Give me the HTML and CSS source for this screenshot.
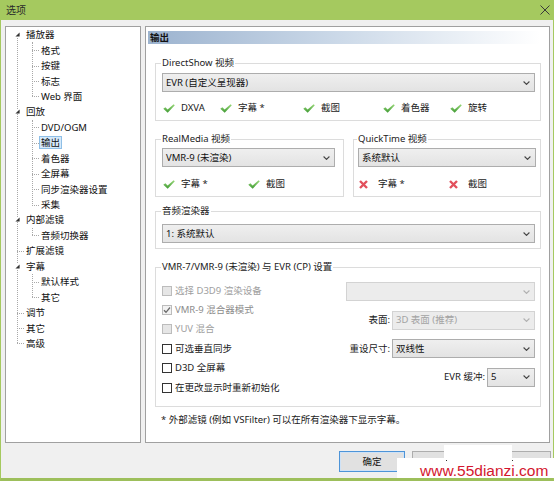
FILE: index.html
```html
<!DOCTYPE html>
<html lang="zh-CN">
<head>
<meta charset="utf-8">
<title>选项</title>
<link rel="stylesheet" href="styles.css">
</head>
<body>
<svg class="defs" width="0" height="0" aria-hidden="true">
  <defs>
    <linearGradient id="gck" x1="0" y1="0" x2="0" y2="1">
      <stop offset="0" stop-color="#9ad97a"/>
      <stop offset="1" stop-color="#3f9a33"/>
    </linearGradient>
    <symbol id="ck" viewBox="0 0 12 9">
      <path d="M0.3 4.7 L2.4 3.2 L4.6 5.5 L10.6 0.2 L11.8 1.3 L4.7 8.7 Z" fill="url(#gck)"/>
    </symbol>
    <symbol id="xx" viewBox="0 0 9 9">
      <path d="M1 1 L8 8 M8 1 L1 8" stroke="#e2505c" stroke-width="2.4" fill="none"/>
    </symbol>
    <symbol id="chev" viewBox="0 0 7 4">
      <polyline points="0.6,0.5 3.5,3.4 6.4,0.5" stroke="#444" stroke-width="1.1" fill="none"/>
    </symbol>
    <symbol id="tri" viewBox="0 0 5 5">
      <polygon points="4.6,0.4 4.6,4.6 0.4,4.6" fill="#333"/>
    </symbol>
  </defs>
</svg>
<div class="screen">
  <div class="window">
    <div class="titlebar">
      <span class="ttl">选项</span>
      <svg class="close" width="10" height="10" viewBox="0 0 10 10"><path d="M0.5 0.5 L9.5 9.5 M9.5 0.5 L0.5 9.5" stroke="#3a3a3a" stroke-width="1" fill="none"/></svg>
    </div>
    <div class="main">
      <div class="tree">
        <ul class="roots">
          <li>
            <div class="row root"><span class="tw"><svg class="tri"><use href="#tri"/></svg></span><span class="lbl">播放器</span></div>
            <ul class="kids">
              <li><div class="row kid"><span class="lbl">格式</span></div></li>
              <li><div class="row kid"><span class="lbl">按键</span></div></li>
              <li><div class="row kid"><span class="lbl">标志</span></div></li>
              <li><div class="row kid"><span class="lbl">Web 界面</span></div></li>
            </ul>
          </li>
          <li>
            <div class="row root"><span class="tw"><svg class="tri"><use href="#tri"/></svg></span><span class="lbl">回放</span></div>
            <ul class="kids">
              <li><div class="row kid"><span class="lbl">DVD/OGM</span></div></li>
              <li><div class="row kid"><span class="lbl sel">输出</span></div></li>
              <li><div class="row kid"><span class="lbl">着色器</span></div></li>
              <li><div class="row kid"><span class="lbl">全屏幕</span></div></li>
              <li><div class="row kid"><span class="lbl">同步渲染器设置</span></div></li>
              <li><div class="row kid"><span class="lbl">采集</span></div></li>
            </ul>
          </li>
          <li>
            <div class="row root"><span class="tw"><svg class="tri"><use href="#tri"/></svg></span><span class="lbl">内部滤镜</span></div>
            <ul class="kids">
              <li><div class="row kid"><span class="lbl">音频切换器</span></div></li>
            </ul>
          </li>
          <li><div class="row root"><span class="tw leaf"></span><span class="lbl">扩展滤镜</span></div></li>
          <li>
            <div class="row root"><span class="tw"><svg class="tri"><use href="#tri"/></svg></span><span class="lbl">字幕</span></div>
            <ul class="kids">
              <li><div class="row kid"><span class="lbl">默认样式</span></div></li>
              <li><div class="row kid"><span class="lbl">其它</span></div></li>
            </ul>
          </li>
          <li><div class="row root"><span class="tw leaf"></span><span class="lbl">调节</span></div></li>
          <li><div class="row root"><span class="tw leaf"></span><span class="lbl">其它</span></div></li>
          <li><div class="row root"><span class="tw leaf"></span><span class="lbl">高级</span></div></li>
        </ul>
      </div>

      <div class="panel">
        <div class="hdr">输出</div>
        <div class="groups">
          <fieldset class="grp ds">
            <legend>DirectShow 视频</legend>
            <div class="combo"><span>EVR (自定义呈现器)</span><svg class="chev"><use href="#chev"/></svg></div>
            <div class="checks c5">
              <span class="item"><svg class="ck"><use href="#ck"/></svg>DXVA</span>
              <span class="item"><svg class="ck"><use href="#ck"/></svg>字幕 *</span>
              <span class="item"><svg class="ck"><use href="#ck"/></svg>截图</span>
              <span class="item"><svg class="ck"><use href="#ck"/></svg>着色器</span>
              <span class="item"><svg class="ck"><use href="#ck"/></svg>旋转</span>
            </div>
          </fieldset>

          <div class="row2">
            <fieldset class="grp rm">
              <legend>RealMedia 视频</legend>
              <div class="combo"><span>VMR-9 (未渲染)</span><svg class="chev"><use href="#chev"/></svg></div>
              <div class="checks c2a">
                <span class="item"><svg class="ck"><use href="#ck"/></svg>字幕 *</span>
                <span class="item"><svg class="ck"><use href="#ck"/></svg>截图</span>
              </div>
            </fieldset>
            <fieldset class="grp qt">
              <legend>QuickTime 视频</legend>
              <div class="combo"><span>系统默认</span><svg class="chev"><use href="#chev"/></svg></div>
              <div class="checks c2b">
                <span class="item xi"><svg class="xx"><use href="#xx"/></svg>字幕 *</span>
                <span class="item xi"><svg class="xx"><use href="#xx"/></svg>截图</span>
              </div>
            </fieldset>
          </div>

          <fieldset class="grp au">
            <legend>音频渲染器</legend>
            <div class="combo"><span>1: 系统默认</span><svg class="chev"><use href="#chev"/></svg></div>
          </fieldset>

          <fieldset class="grp vmr">
            <legend>VMR-7/VMR-9 (未渲染) 与 EVR (CP) 设置</legend>
            <div class="vbody">
              <div class="lcol">
                <div class="crow dis"><span class="box"></span>选择 D3D9 渲染设备</div>
                <div class="crow dis mid"><span class="box on"><svg width="8" height="8" viewBox="0 0 8 8"><polyline points="1,4.2 3,6.3 7,1.5" stroke="#6a6a6a" stroke-width="1.3" fill="none"/></svg></span>VMR-9 混合器模式</div>
                <div class="crow dis"><span class="box"></span>YUV 混合</div>
                <div class="crow"><span class="box"></span>可选垂直同步</div>
                <div class="crow"><span class="box"></span>D3D 全屏幕</div>
                <div class="crow"><span class="box"></span>在更改显示时重新初始化</div>
              </div>
              <div class="rcol">
                <div class="combo off wfull"><span></span><svg class="chev"><use href="#chev"/></svg></div>
                <div class="rrow"><span>表面:</span><div class="combo off w143"><span>3D 表面 (推荐)</span><svg class="chev"><use href="#chev"/></svg></div></div>
                <div class="rrow"><span>重设尺寸:</span><div class="combo w143"><span>双线性</span><svg class="chev"><use href="#chev"/></svg></div></div>
                <div class="rrow"><span>EVR 缓冲:</span><div class="combo w48"><span>5</span><svg class="chev"><use href="#chev"/></svg></div></div>
              </div>
            </div>
          </fieldset>
        </div>
        <div class="note">* 外部滤镜 (例如 VSFilter) 可以在所有渲染器下显示字幕。</div>
      </div>
    </div>
    <div class="footer">
      <div class="btn def">确定</div>
      <div class="btn"></div>
      <div class="btn"></div>
    </div>
  </div>
  <div class="wm wm-a"></div>
  <div class="wm wm-b"></div>
  <span class="dot d1"></span>
  <span class="dot d2"></span>
  <span class="wm-t">www.55dianzi.com</span>
</div>
</body>
</html>
```
FILE: styles.css
```css
html, body {
  margin: 0;
  padding: 0;
  background: #ffffff;
}
body {
  font-family: "Noto Sans", "Noto Sans CJK SC", sans-serif;
  font-size: 9.5px;
  line-height: 12px;
  color: #1a1a1a;
}
.defs {
  position: absolute;
  width: 0;
  height: 0;
}
.screen {
  position: relative;
  width: 554px;
  height: 481px;
  overflow: hidden;
}
.window {
  width: 554px;
  height: 481px;
  box-sizing: border-box;
  background: #f0f0f0;
  border-left: 1px solid #a5c95f;
  border-right: 1px solid #a5c95f;
  border-bottom: 3px solid #9dbf5b;
  display: flex;
  flex-direction: column;
}
.titlebar {
  height: 20px;
  flex: none;
  background: #a5c95f;
  display: flex;
  align-items: center;
  justify-content: space-between;
  padding: 0 3px 0 5px;
}
.ttl {
  font-size: 10px;
  color: #2a2a2a;
}
.close {
  display: block;
}
.main {
  display: flex;
  gap: 4px;
  margin-top: 6px;
  padding-left: 4px;
  height: 417px;
  flex: none;
}
.tree {
  width: 136px;
  box-sizing: border-box;
  border: 1px solid #a0a0a0;
  background: #ffffff;
}
.tree ul {
  list-style: none;
  margin: 0;
  padding: 0;
}
.roots {
  position: relative;
}
.roots::before {
  content: "";
  position: absolute;
  left: 11px;
  top: 8px;
  bottom: 8px;
  border-left: 1px dotted #a8a8a8;
}
.kids {
  position: relative;
}
.kids::before {
  content: "";
  position: absolute;
  left: 26px;
  top: 0;
  bottom: 8px;
  border-left: 1px dotted #a8a8a8;
}
.row {
  position: relative;
  height: 15.45px;
  display: flex;
  align-items: center;
}
.root {
  padding-left: 8px;
}
.kid {
  padding-left: 33px;
}
.kid::before {
  content: "";
  position: absolute;
  left: 26px;
  width: 7px;
  top: 50%;
  border-top: 1px dotted #a8a8a8;
}
.tw {
  position: relative;
  width: 10px;
  height: 15px;
  display: flex;
  align-items: center;
}
.tri {
  width: 5px;
  height: 5px;
  margin-left: 1px;
  background: #ffffff;
  position: relative;
}
.tw.leaf::before {
  content: "";
  position: absolute;
  left: 3px;
  width: 7px;
  top: 50%;
  border-top: 1px dotted #a8a8a8;
}
.lbl {
  display: inline-block;
  line-height: 11px;
  padding: 0 1px;
  border: 1px solid transparent;
  color: #111;
}
.lbl.sel {
  background: #d5e9fa;
  border-color: #8fbfe6;
}
.panel {
  width: 405px;
  box-sizing: border-box;
  border: 1px solid #a0a0a0;
  background: #ffffff;
  display: flex;
  flex-direction: column;
}
.hdr {
  margin: 4px 1px 0 2px;
  height: 13px;
  line-height: 13px;
  padding-left: 2px;
  font-weight: bold;
  color: #111;
  background: linear-gradient(to right, #9cb3cf 0%, #c9d7e7 45%, #ffffff 98%);
}
.groups {
  padding: 0 8px 0 9px;
}
.grp {
  margin: 0;
  border: 1px solid #dcdcdc;
  min-width: 0;
  box-sizing: border-box;
}
legend {
  padding: 0 1px;
  margin-left: -1px;
  line-height: 12px;
  color: #222;
}
.ds {
  margin-top: 13px;
  padding: 4px 5px 5px 6px;
}
.combo {
  height: 19px;
  box-sizing: border-box;
  border: 1px solid #adadad;
  background: linear-gradient(#efefef, #e3e3e3);
  display: flex;
  align-items: center;
  justify-content: space-between;
  padding: 0 4px 0 3px;
  color: #111;
  white-space: nowrap;
}
.chev {
  width: 7px;
  height: 4px;
  flex: none;
}
.combo.off {
  background: #ececec;
  border-color: #d3d3d3;
  color: #a3a3a3;
}
.combo.off .chev {
  opacity: 0.35;
}
.checks {
  display: grid;
  align-items: center;
  height: 14px;
  margin-top: 9px;
  padding-left: 1px;
}
.c5 {
  grid-template-columns: 57px 83px 80px 67px auto;
}
.c2a {
  grid-template-columns: 85px auto;
  margin-top: 10px;
}
.c2b {
  grid-template-columns: 90px auto;
  margin-top: 10px;
}
.item {
  display: flex;
  align-items: center;
  gap: 6px;
  white-space: nowrap;
}
.item.xi {
  gap: 10px;
}
.ck {
  width: 12px;
  height: 9px;
  flex: none;
}
.xx {
  width: 9px;
  height: 9px;
  flex: none;
}
.row2 {
  display: flex;
  gap: 9px;
  margin-top: 12px;
}
.rm {
  width: 189px;
  padding: 3px 8px 5px 6px;
}
.qt {
  width: 188px;
  padding: 3px 4px 5px 4px;
}
.au {
  margin-top: 8px;
  padding: 7px 5px 5px 6px;
}
.vmr {
  margin-top: 12px;
  padding: 8px 5px 9px 6px;
}
.vbody {
  display: flex;
}
.lcol {
  flex: 1;
}
.crow {
  height: 19.4px;
  display: flex;
  align-items: center;
  gap: 3px;
  white-space: nowrap;
}
.box {
  width: 10px;
  height: 10px;
  box-sizing: border-box;
  border: 1px solid #333333;
  background: #ffffff;
  display: flex;
  align-items: center;
  justify-content: center;
  flex: none;
}
.crow.dis {
  color: #a0a0a0;
}
.crow.dis .box {
  border-color: #bcbcbc;
  background: #e6e6e6;
}
.crow.dis .box.on {
  background: #f2f2f2;
}
.crow.mid {
  color: #8c8c8c;
}
.rcol {
  width: 189px;
  flex: none;
  display: flex;
  flex-direction: column;
  align-items: flex-end;
  gap: 9.5px;
  margin-top: 1px;
}
.rrow {
  display: flex;
  align-items: center;
  gap: 2px;
  white-space: nowrap;
}
.wfull {
  width: 189px;
}
.w143 {
  width: 143px;
}
.w48 {
  width: 48px;
}
.note {
  margin: 7px 0 0 15px;
  line-height: 12px;
  color: #1a1a1a;
}
.footer {
  display: flex;
  justify-content: flex-end;
  gap: 7px;
  margin-top: 8px;
  padding-right: 2px;
}
.btn {
  width: 66px;
  height: 21px;
  box-sizing: border-box;
  border: 1px solid #adadad;
  background: #e1e1e1;
  display: flex;
  align-items: center;
  justify-content: center;
  color: #111;
}
.btn.def {
  border-color: #4d94d8;
  box-shadow: inset 0 0 0 1px #cfe2f6;
}
.wm {
  position: absolute;
  background: #ffffff;
}
.wm-a {
  left: 444px;
  top: 445px;
  width: 68px;
  height: 13px;
}
.wm-b {
  left: 397px;
  top: 458px;
  width: 157px;
  height: 20px;
}
.dot {
  position: absolute;
  width: 1px;
  height: 1px;
  background: #333;
}
.d1 {
  left: 446px;
  top: 460px;
}
.d2 {
  left: 512px;
  top: 460px;
}
.wm-t {
  position: absolute;
  left: 420px;
  top: 463px;
  font-family: "Liberation Sans", Arial, sans-serif;
  font-size: 15.5px;
  line-height: 15.5px;
  color: #d3162e;
}
```
